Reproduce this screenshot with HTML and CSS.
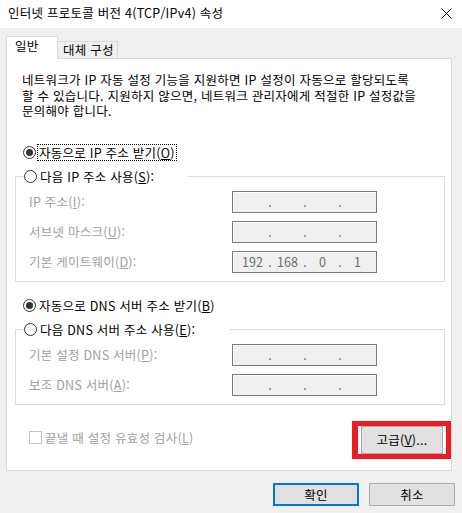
FILE: index.html
```html
<!DOCTYPE html>
<html lang="ko">
<head>
<meta charset="utf-8">
<title>인터넷 프로토콜 버전 4(TCP/IPv4) 속성</title>
<link rel="stylesheet" href="styles.css">
</head>
<body>
<div class="window">
  <div class="titlebar">
    <span class="title">인터넷 프로토콜 버전 4(TCP/IPv4) 속성</span>
    <svg class="close" width="11" height="11" viewBox="0 0 11 11"><path d="M0.5 0.5 L10.5 10.5 M10.5 0.5 L0.5 10.5" stroke="#000" stroke-width="1" fill="none"/></svg>
  </div>
  <div class="main">
    <div class="tabs">
      <div class="tab active">일반</div>
      <div class="tab">대체 구성</div>
    </div>
    <div class="panel">
      <p class="desc">네트워크가 IP 자동 설정 기능을 지원하면 IP 설정이 자동으로 할당되도록<br>할 수 있습니다. 지원하지 않으면, 네트워크 관리자에게 적절한 IP 설정값을<br>문의해야 합니다.</p>

      <div class="radio-row first">
        <span class="radio checked"></span><span class="rlabel focus">자동으로 IP 주소 받기(<u>O</u>)</span>
      </div>
      <fieldset class="group">
        <legend class="legend"><span class="radio"></span><span class="rlabel">다음 IP 주소 사용(<u>S</u>):</span></legend>
        <div class="field-row">
          <span class="flabel">IP 주소(<u>I</u>):</span>
          <div class="ipbox"><span class="oct"></span><span class="dot">.</span><span class="oct"></span><span class="dot">.</span><span class="oct"></span><span class="dot">.</span><span class="oct"></span></div>
        </div>
        <div class="field-row">
          <span class="flabel">서브넷 마스크(<u>U</u>):</span>
          <div class="ipbox"><span class="oct"></span><span class="dot">.</span><span class="oct"></span><span class="dot">.</span><span class="oct"></span><span class="dot">.</span><span class="oct"></span></div>
        </div>
        <div class="field-row">
          <span class="flabel">기본 게이트웨이(<u>D</u>):</span>
          <div class="ipbox"><span class="oct">192</span><span class="dot">.</span><span class="oct">168</span><span class="dot">.</span><span class="oct">0</span><span class="dot">.</span><span class="oct">1</span></div>
        </div>
      </fieldset>

      <div class="radio-row second">
        <span class="radio checked"></span><span class="rlabel">자동으로 DNS 서버 주소 받기(<u>B</u>)</span>
      </div>
      <fieldset class="group">
        <legend class="legend"><span class="radio"></span><span class="rlabel">다음 DNS 서버 주소 사용(<u>E</u>):</span></legend>
        <div class="field-row">
          <span class="flabel">기본 설정 DNS 서버(<u>P</u>):</span>
          <div class="ipbox"><span class="oct"></span><span class="dot">.</span><span class="oct"></span><span class="dot">.</span><span class="oct"></span><span class="dot">.</span><span class="oct"></span></div>
        </div>
        <div class="field-row">
          <span class="flabel">보조 DNS 서버(<u>A</u>):</span>
          <div class="ipbox"><span class="oct"></span><span class="dot">.</span><span class="oct"></span><span class="dot">.</span><span class="oct"></span><span class="dot">.</span><span class="oct"></span></div>
        </div>
      </fieldset>

      <div class="panel-bottom">
        <div class="check-row">
          <span class="checkbox"></span><span class="clabel">끝낼 때 설정 유효성 검사(<u>L</u>)</span>
        </div>
        <div class="adv-wrap">
          <button class="btn adv">고급(<u>V</u>)...</button>
          <span class="highlight"></span>
        </div>
      </div>
    </div>
    <div class="actions">
      <button class="btn default">확인</button>
      <button class="btn">취소</button>
    </div>
  </div>
</div>
</body>
</html>
```
FILE: styles.css
```css
* { box-sizing: border-box; }

html, body {
  margin: 0;
  padding: 0;
}

body {
  width: 462px;
  height: 513px;
  overflow: hidden;
  background: #f0f0f0;
  font-family: "Noto Sans CJK KR", "Noto Sans", sans-serif;
  font-size: 12.5px;
  letter-spacing: 0.25px;
  color: #000;
}

u { text-decoration: underline; text-underline-offset: 1px; }

.titlebar {
  height: 28px;
  background: #fff;
  display: flex;
  align-items: center;
  justify-content: space-between;
  padding: 0 10px 0 8px;
}

.title {
  line-height: 14px;
  margin-top: -2px;
}

.close {
  display: block;
  margin-top: -2px;
}

.main {
  padding: 8px 10px 0 6px;
}

.tabs {
  display: flex;
  align-items: flex-end;
  height: 23px;
  margin-bottom: -1px;
  position: relative;
  z-index: 1;
}

.tab {
  border: 1px solid #d9d9d9;
  line-height: 15px;
}

.tab.active {
  width: 52px;
  height: 23px;
  background: #fff;
  border-bottom: none;
  padding: 1px 0 0 8px;
  position: relative;
  z-index: 2;
}

.tab:not(.active) {
  width: 61px;
  height: 18px;
  margin-left: -1px;
  background: #f0f0f0;
  padding: 0 0 0 5px;
  white-space: nowrap;
}

.panel {
  height: 413px;
  background: #fff;
  border: 1px solid #d9d9d9;
  padding: 0;
}

.desc {
  margin: 13px 0 0 15px;
  line-height: 15.5px;
  white-space: nowrap;
}

.radio-row {
  display: flex;
  align-items: center;
  height: 15px;
  margin-left: 16px;
}

.radio-row.first { margin-top: 26px; }
.radio-row.second { margin-top: 16px; }

.radio {
  width: 13px;
  height: 13px;
  border: 1px solid #333;
  border-radius: 50%;
  background: #fff;
  flex: none;
  display: flex;
  align-items: center;
  justify-content: center;
}

.radio.checked::after {
  content: "";
  width: 7px;
  height: 7px;
  border-radius: 50%;
  background: #333;
}

.rlabel {
  margin-left: 2px;
  line-height: 15px;
  padding: 0 1px;
  white-space: nowrap;
}

.rlabel.focus {
  outline: 1px dotted #000;
  outline-offset: 0;
}

.group {
  margin: 9px 6px 0 8px;
  padding: 7px 7px 8px 7px;
  border: 1px solid #dcdcdc;
  min-width: 0;
}

.legend {
  padding: 0 33px 0 0;
  margin-left: 1px;
  display: flex;
  align-items: center;
  height: 15px;
  background: #fff;
}

.field-row {
  display: flex;
  align-items: center;
  height: 22px;
  padding-left: 6px;
}

.field-row + .field-row { margin-top: 8px; }

.flabel {
  width: 203px;
  color: #a0a0a0;
  line-height: 15px;
  white-space: nowrap;
}

.ipbox {
  width: 145px;
  height: 22px;
  border: 1px solid #7a7a7a;
  background: #f0f0f0;
  box-shadow: inset 1px 1px 0 #ffffff;
  display: flex;
  align-items: center;
  padding-left: 4px;
  color: #6d6d6d;
  line-height: 15px;
  letter-spacing: 0;
}

.oct {
  width: 31px;
  text-align: center;
}

.dot {
  width: 4px;
  text-align: center;
}

.panel-bottom {
  display: flex;
  justify-content: space-between;
  align-items: center;
  margin: 21px 8px 0 22px;
}

.check-row {
  display: flex;
  align-items: center;
  margin-top: -5px;
}

.checkbox {
  width: 13px;
  height: 13px;
  border: 1px solid #c4c4c4;
  background: #fff;
}

.clabel {
  margin-left: 3px;
  color: #a0a0a0;
  line-height: 15px;
  white-space: nowrap;
}

.btn {
  font-family: inherit;
  font-size: 12.5px;
  letter-spacing: 0.25px;
  color: #000;
  background: #e1e1e1;
  border: 1px solid #adadad;
  padding: 0;
  margin: 0;
  line-height: 15px;
}

.adv-wrap {
  position: relative;
}

.btn.adv {
  display: block;
  width: 82px;
  height: 28px;
}

.highlight {
  position: absolute;
  left: -9px;
  top: -5px;
  width: 99px;
  height: 38px;
  border: 5px solid #ed1c24;
  border-left-width: 6px;
  pointer-events: none;
}

.actions {
  display: flex;
  justify-content: flex-end;
  gap: 10px;
  margin: 12px -3px 0 0;
}

.actions .btn {
  width: 86px;
  height: 23px;
}

.actions .btn.default {
  border: 2px solid #0078d7;
}
```
